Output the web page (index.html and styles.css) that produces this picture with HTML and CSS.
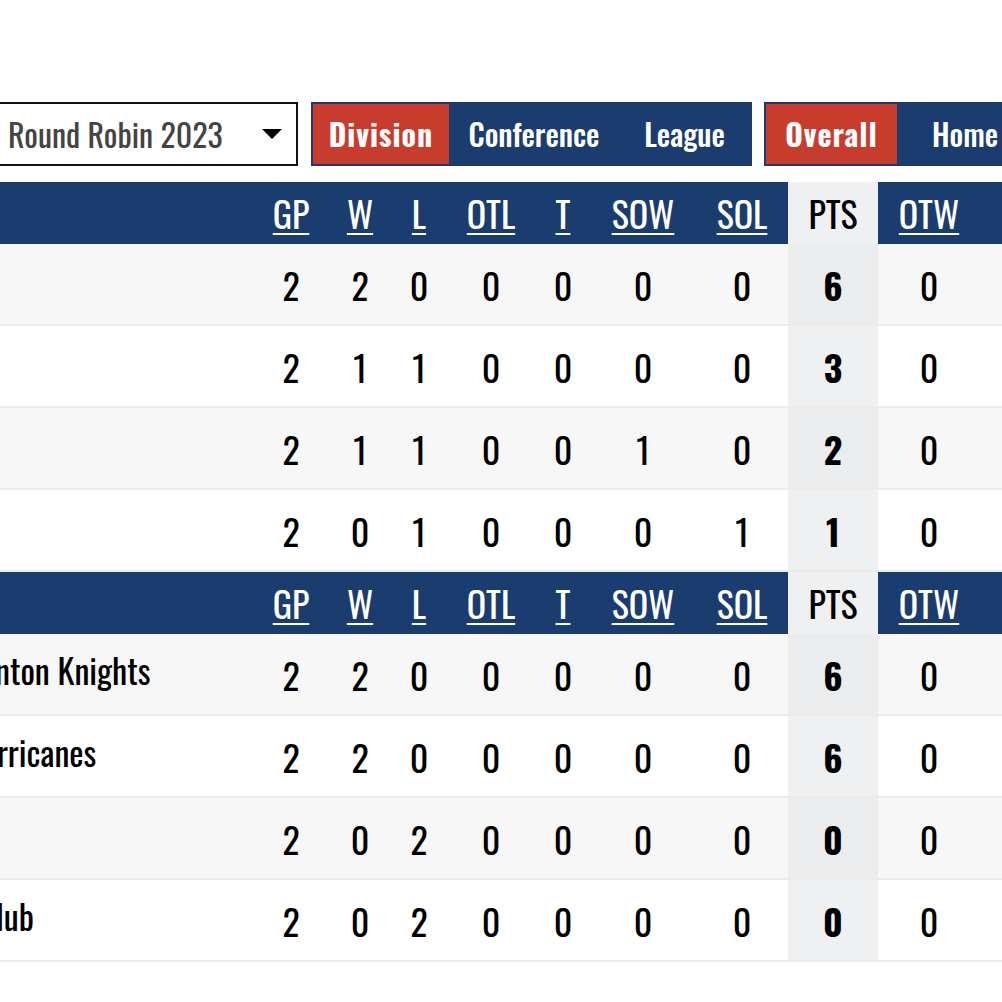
FILE: index.html
```html
<!DOCTYPE html>
<html lang="en">
<head>
<meta charset="utf-8">
<title>Standings</title>
<link rel="stylesheet" href="styles.css">
</head>
<body>
<div class="filters">
  <div class="select">
    <span class="select-label">Round Robin 2023</span>
    <svg class="select-arrow" width="20" height="10" viewBox="0 0 20 10"><polygon points="0,0 20,0 10,10" fill="#000"/></svg>
  </div>
  <div class="toggle">
    <span class="tbtn active w-div">Division</span>
    <span class="tbtn w-conf">Conference</span>
    <span class="tbtn w-league">League</span>
  </div>
  <div class="toggle">
    <span class="tbtn active w-overall">Overall</span>
    <span class="tbtn w-home">Home</span>
    <span class="tbtn w-away">Away</span>
  </div>
</div>

<div class="tables">
  <table class="standings">
    <colgroup>
      <col class="c-name"><col class="c-gp"><col class="c-w"><col class="c-l"><col class="c-otl"><col class="c-t"><col class="c-sow"><col class="c-sol"><col class="c-pts"><col class="c-otw"><col class="c-gf"><col class="c-ga">
    </colgroup>
    <thead>
      <tr>
        <th class="name"></th>
        <th><a>GP</a></th><th><a>W</a></th><th><a>L</a></th><th><a>OTL</a></th><th><a>T</a></th><th><a>SOW</a></th><th><a>SOL</a></th><th class="pts">PTS</th><th><a>OTW</a></th><th><a>GF</a></th><th><a>GA</a></th>
      </tr>
    </thead>
    <tbody>
      <tr><td class="name">Wolves</td><td>2</td><td>2</td><td>0</td><td>0</td><td>0</td><td>0</td><td>0</td><td class="pts">6</td><td>0</td><td>9</td><td>3</td></tr>
      <tr><td class="name">Blades</td><td>2</td><td>1</td><td>1</td><td>0</td><td>0</td><td>0</td><td>0</td><td class="pts">3</td><td>0</td><td>6</td><td>5</td></tr>
      <tr><td class="name">Storm</td><td>2</td><td>1</td><td>1</td><td>0</td><td>0</td><td>1</td><td>0</td><td class="pts">2</td><td>0</td><td>5</td><td>6</td></tr>
      <tr><td class="name">Rebels</td><td>2</td><td>0</td><td>1</td><td>0</td><td>0</td><td>0</td><td>1</td><td class="pts">1</td><td>0</td><td>3</td><td>9</td></tr>
    </tbody>
  </table>

  <table class="standings">
    <colgroup>
      <col class="c-name"><col class="c-gp"><col class="c-w"><col class="c-l"><col class="c-otl"><col class="c-t"><col class="c-sow"><col class="c-sol"><col class="c-pts"><col class="c-otw"><col class="c-gf"><col class="c-ga">
    </colgroup>
    <thead>
      <tr>
        <th class="name"></th>
        <th><a>GP</a></th><th><a>W</a></th><th><a>L</a></th><th><a>OTL</a></th><th><a>T</a></th><th><a>SOW</a></th><th><a>SOL</a></th><th class="pts">PTS</th><th><a>OTW</a></th><th><a>GF</a></th><th><a>GA</a></th>
      </tr>
    </thead>
    <tbody>
      <tr><td class="name">East Edmonton Knights</td><td>2</td><td>2</td><td>0</td><td>0</td><td>0</td><td>0</td><td>0</td><td class="pts">6</td><td>0</td><td>8</td><td>2</td></tr>
      <tr><td class="name">Halifax Hurricanes</td><td>2</td><td>2</td><td>0</td><td>0</td><td>0</td><td>0</td><td>0</td><td class="pts">6</td><td>0</td><td>7</td><td>3</td></tr>
      <tr><td class="name">Vipers</td><td>2</td><td>0</td><td>2</td><td>0</td><td>0</td><td>0</td><td>0</td><td class="pts">0</td><td>0</td><td>3</td><td>7</td></tr>
      <tr><td class="name">Windsor Club</td><td>2</td><td>0</td><td>2</td><td>0</td><td>0</td><td>0</td><td>0</td><td class="pts">0</td><td>0</td><td>2</td><td>8</td></tr>
    </tbody>
  </table>
</div>
</body>
</html>
```
FILE: styles.css
```css
html, body {
  margin: 0;
  padding: 0;
  overflow: hidden;
  background: #fff;
}
body {
  font-family: "Oswald", "Liberation Sans Narrow", sans-serif;
  color: #000;
}

/* filter bar */
.filters {
  display: flex;
  align-items: flex-start;
  gap: 12px;
  margin: 102px 0 0 -4px;
  white-space: nowrap;
}
.filters > * { flex-shrink: 0; }
.select {
  box-sizing: border-box;
  width: 302px;
  height: 64px;
  border: 2px solid #111;
  background: #fff;
  display: flex;
  align-items: center;
  justify-content: space-between;
  padding: 0 14px 0 10px;
  margin-right: 1px;
}
.select-label {
  font-size: 32px;
  color: #444;
  font-weight: 400;
  line-height: 1;
}
.select-arrow { display: block; }

.toggle {
  display: flex;
  border: 2px solid #1a3c6e;
  background: #1a3c6e;
  height: 60px;
}
.tbtn {
  display: flex;
  align-items: center;
  justify-content: center;
  flex-shrink: 0;
  color: #fff;
  font-size: 30px;
  font-weight: 500;
  line-height: 1;
}
.tbtn.active {
  background: #c83c2d;
  font-weight: 700;
  letter-spacing: 1px;
}
.w-div { width: 136px; }
.w-conf { width: 170px; }
.w-league { width: 131px; }
.w-overall { width: 131px; }
.w-home { width: 136px; }
.w-away { width: 131px; }

/* tables */
.tables {
  margin: 16px 0 0 -200px;
}
.standings {
  border-collapse: collapse;
  table-layout: fixed;
  width: 1340px;
}
.c-name { width: 454px; }
.c-gp { width: 74px; }
.c-w { width: 64px; }
.c-l { width: 54px; }
.c-otl { width: 90px; }
.c-t { width: 54px; }
.c-sow { width: 106px; }
.c-sol { width: 92px; }
.c-pts { width: 90px; }
.c-otw { width: 102px; }
.c-gf { width: 80px; }
.c-ga { width: 80px; }

.standings th {
  background: #1a3c6e;
  color: #fff;
  font-size: 36px;
  font-weight: 400;
  height: 60px;
  padding: 0 0 2px;
  text-align: center;
  white-space: nowrap;
}
.standings th a {
  color: #fff;
  text-decoration: underline;
  text-decoration-thickness: 2px;
  text-underline-offset: 4px;
}
.standings th.pts {
  background: #eff0f2;
  color: #000;
}
.standings td {
  height: 80px;
  padding: 0;
  font-size: 36px;
  font-weight: 400;
  text-align: center;
  border-bottom: 2px solid #ebebeb;
  white-space: nowrap;
  overflow: hidden;
}
.standings tbody tr:nth-child(odd) td { background: #f7f7f7; }
.standings tbody tr:nth-child(even) td { background: #fff; }
.standings tbody tr:nth-child(odd) td.pts { background: #ebecee; }
.standings tbody tr:nth-child(even) td.pts { background: #eff0f2; }
.standings td.pts { font-weight: 700; }
.standings td.name {
  text-align: left;
  font-size: 34px;
  height: 70px;
  padding: 0 0 10px 70px;
}
```
